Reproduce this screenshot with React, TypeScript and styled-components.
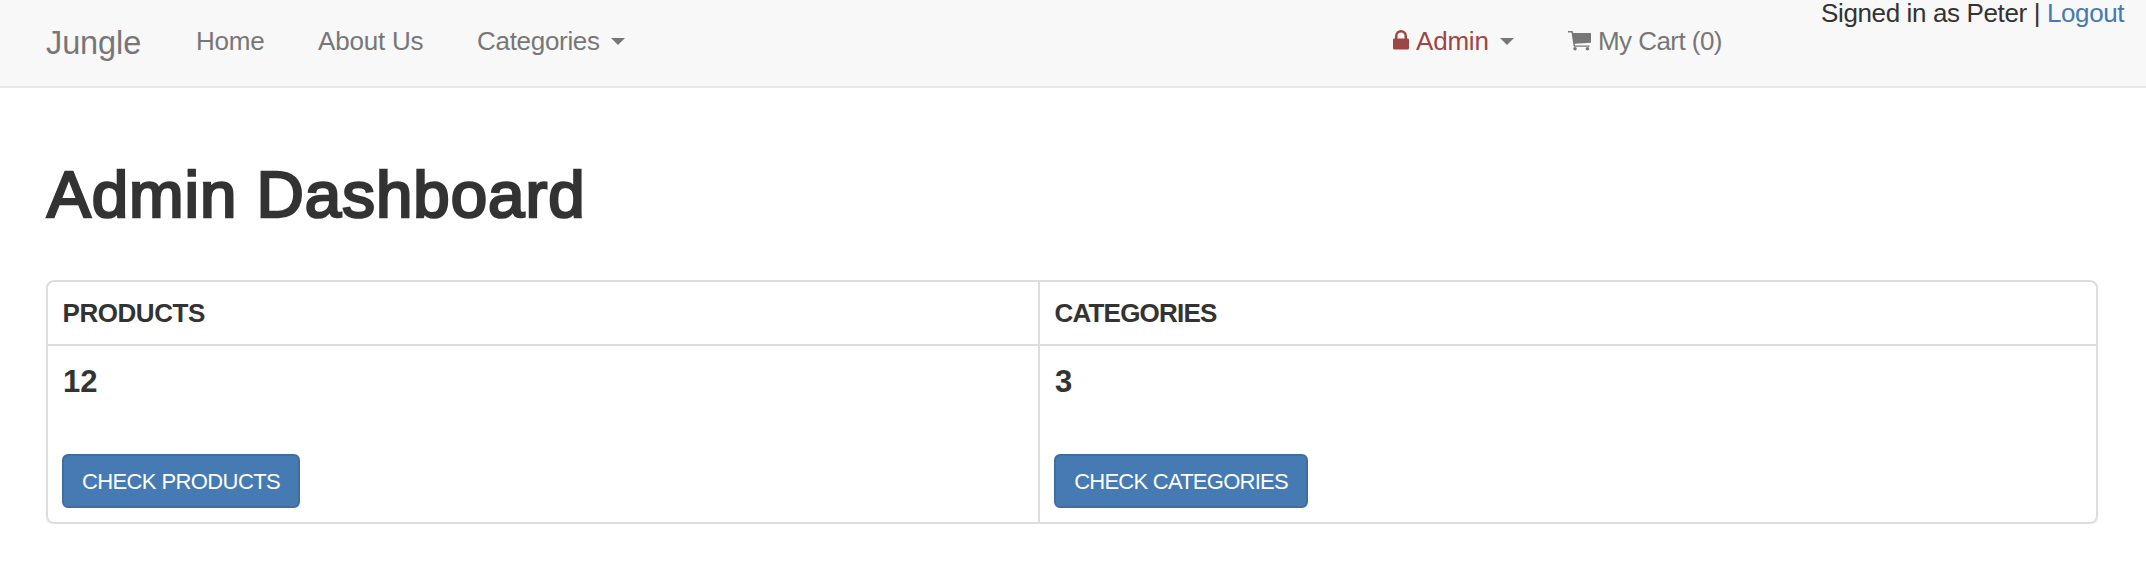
import React from "react";
import styled, { createGlobalStyle } from "styled-components";

const Global = createGlobalStyle`
  * { box-sizing: border-box; }
  body { margin: 0; background: #fff; color: #333; font: 26px/36px "Liberation Sans", Arial, sans-serif; }
`;
const Navbar = styled.nav`
  height: 88px; display: flex; align-items: flex-start; padding-left: 46px;
  background: #f8f8f8; border-bottom: 2px solid #e7e7e7; color: #777; white-space: nowrap;
`;
const Brand = styled.a`
  width: 150px; padding-top: 25px; font-size: 32.5px; letter-spacing: -0.1px;
`;
const NavItem = styled.a<{ $width: number; $tone?: string; $spacing?: number }>`
  width: ${(p) => p.$width}px; padding-top: 23px; display: flex;
  color: ${(p) => p.$tone ?? "#777"}; letter-spacing: ${(p) => p.$spacing ?? 0}px;
`;
const Caret = styled.span`
  margin: 15px 0 0 11px; width: 14px; height: 0;
  border: 7px solid transparent; border-top: 7px solid #777; border-bottom: 0;
`;
const Icon = styled.svg<{ $gap: number }>`
  display: block; flex: none; margin: 6px ${(p) => p.$gap}px 0 0; fill: currentColor;
`;
const RightNav = styled.div`
  display: flex; margin-left: auto; width: 753px;
`;
const Session = styled.div`
  margin-top: -5px; color: #333; letter-spacing: -0.37px;
`;
const Logout = styled.a` color: #457ab2; `;
const Main = styled.main` padding: 71px 48px 0 46px; `;
const Title = styled.h1`
  margin: 0; height: 121px; padding-left: 1px; font-size: 65.5px; line-height: 72px; font-weight: 400;
  letter-spacing: 0.95px; -webkit-text-stroke: 2.6px #333;
`;
const Panel = styled.section`
  height: 244px; display: grid; grid-template-columns: 990px 1fr; grid-template-rows: 64px 1fr;
  border: 2px solid #ddd; border-radius: 8px; box-shadow: 0 2px 2px rgba(0, 0, 0, 0.05);
  > :nth-child(even) { border-left: 2px solid #ddd; }
`;
const HeadCell = styled.div<{ $spacing: number }>`
  border-bottom: 2px solid #ddd; padding: 13px 14.5px 0; font-weight: 700;
  letter-spacing: ${(p) => p.$spacing}px;
`;
const BodyCell = styled.div` padding: 18px 14px 0; `;
const Count = styled.strong` display: block; height: 90px; padding-left: 1px; font-size: 31px; `;
const Button = styled.button<{ $width: number; $spacing: number }>`
  display: block; width: ${(p) => p.$width}px; height: 54px; padding: 2px 0 0; background: #457ab2;
  border: 2px solid #3e6ea2; border-radius: 6px; color: #fff; text-align: center;
  font: 22px/30px "Liberation Sans", Arial, sans-serif; letter-spacing: ${(p) => p.$spacing}px;
  white-space: nowrap;
`;

const panels = [
  { name: "PRODUCTS", count: 12, headSpacing: -0.45, buttonWidth: 238, buttonSpacing: -0.6 },
  { name: "CATEGORIES", count: 3, headSpacing: -0.8, buttonWidth: 254, buttonSpacing: -0.75 },
];

export default function App() {
  return (
    <>
      <Global />
      <Navbar>
        <Brand>Jungle</Brand>
        <NavItem $width={122} $spacing={-0.2}>Home</NavItem>
        <NavItem $width={159} $spacing={-0.2}>About Us</NavItem>
        <NavItem $width={160} $spacing={-0.3}>Categories<Caret /></NavItem>
        <RightNav>
          <NavItem $width={175} $tone="#9d4643" $spacing={-0.2}>
            <Icon $gap={7} width="16" height="21" viewBox="0 0 16 21">
              <path d="M2 9.500V7a6 6 0 0 1 12 0v2.500h.8A1.200 1.200 0 0 1 16 10.700v8.300a1.500 1.500 0 0 1-1.500 1.500h-13A1.500 1.500 0 0 1 0 19v-8.300A1.200 1.200 0 0 1 1.200 9.500zM4.500 9.500h7V7a3.500 3.500 0 0 0-7 0z" />
            </Icon>
            Admin<Caret />
          </NavItem>
          <NavItem $width={253} $spacing={-0.55}>
            <Icon $gap={7} width="23" height="24" viewBox="0 0 23 24">
              <path d="M0 2h4.500L5.300 4H23v9.700L6.800 14.800l.3 1.700H21.500v1.300H5.700L3.500 3.500H0z" />
              <circle cx="7" cy="19.800" r="1.800" /><circle cx="19.500" cy="19.800" r="1.800" />
            </Icon>
            My Cart (0)
          </NavItem>
          <Session>Signed in as Peter | <Logout>Logout</Logout></Session>
        </RightNav>
      </Navbar>
      <Main>
        <Title>Admin Dashboard</Title>
        <Panel>
          {panels.map((p) => <HeadCell key={p.name} $spacing={p.headSpacing}>{p.name}</HeadCell>)}
          {panels.map((p) => (
            <BodyCell key={p.name}>
              <Count>{p.count}</Count>
              <Button $width={p.buttonWidth} $spacing={p.buttonSpacing}>CHECK {p.name}</Button>
            </BodyCell>
          ))}
        </Panel>
      </Main>
    </>
  );
}
